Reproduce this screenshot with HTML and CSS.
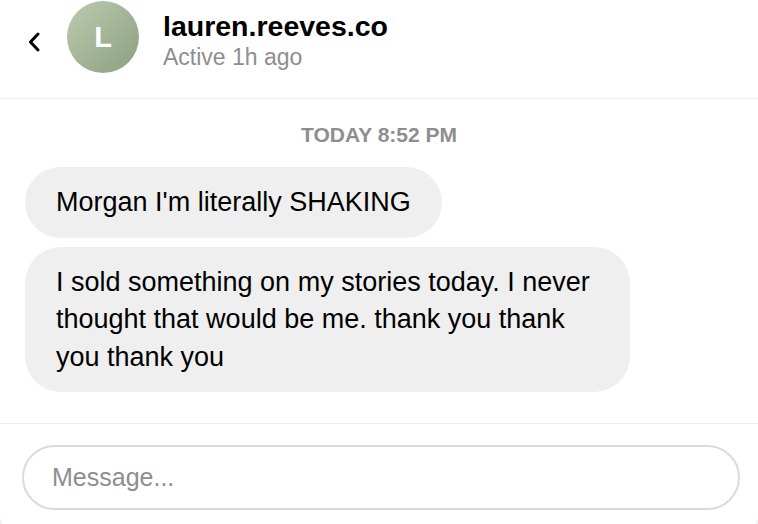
FILE: index.html
```html
<!DOCTYPE html>
<html lang="en">
<head>
    <meta charset="UTF-8">
    <meta name="viewport" content="width=device-width, initial-scale=1.0">
    <title>lauren.reeves.co</title>
    <link rel="stylesheet" href="styles.css">
</head>
<body>
    <div class="chat">
        <div class="chat-header">
            <svg class="back" width="14" height="20" viewBox="0 0 14 20">
                <path d="M11 2 L3.5 10 L11 18" fill="none" stroke="#000" stroke-width="3" stroke-linecap="round" stroke-linejoin="round"/>
            </svg>
            <div class="avatar">L</div>
            <div class="who">
                <div class="username">lauren.reeves.co</div>
                <div class="status">Active 1h ago</div>
            </div>
        </div>

        <div class="thread">
            <div class="stamp">TODAY 8:52 PM</div>
            <div class="bubble">Morgan I'm literally SHAKING</div>
            <div class="bubble">I sold something on my stories today. I never thought that would be me. thank you thank you thank you</div>
        </div>

        <div class="composer">
            <input class="message-input" type="text" placeholder="Message...">
        </div>
    </div>
</body>
</html>
```

FILE: styles.css
```css
html, body {
    margin: 0;
    height: 100%;
    overflow: hidden;
}
body {
    background-color: #f3f0ea;
    font-family: "Liberation Sans", Arial, sans-serif;
    color: #000;
}
.chat {
    background: #fff;
    height: 530px;
    border-radius: 0 0 14px 14px;
    display: flex;
    flex-direction: column;
}
.chat-header {
    display: flex;
    align-items: center;
    padding: 1px 24px 25px 27px;
    border-bottom: 1px solid #efefef;
}
.back {
    margin-top: 9px;
    margin-right: 26px;
}
.avatar {
    width: 72px;
    height: 72px;
    border-radius: 50%;
    background: linear-gradient(135deg, #bccbaf, #8c9f80);
    color: #fff;
    font-size: 29px;
    font-weight: bold;
    display: flex;
    justify-content: center;
    align-items: center;
    margin-right: 24px;
}
.who {
    margin-top: 5px;
}
.username {
    font-size: 28.5px;
    font-weight: bold;
    line-height: 34px;
}
.status {
    font-size: 23px;
    line-height: 27px;
    color: #8e8e8e;
    margin-top: 1px;
}
.thread {
    flex: 1;
    display: flex;
    flex-direction: column;
    align-items: flex-start;
    gap: 9px;
    padding: 24px 25px;
}
.stamp {
    align-self: center;
    font-size: 21px;
    font-weight: bold;
    line-height: 24px;
    color: #8e8e8e;
    margin-bottom: 11px;
}
.bubble {
    background-color: #efefef;
    font-size: 27px;
    line-height: 37.5px;
    padding: 17px 31px 16px;
    border-radius: 36px;
    max-width: 543px;
}
.composer {
    border-top: 1px solid #efefef;
    padding: 21px 18px 20px 22px;
}
.message-input {
    box-sizing: border-box;
    width: 100%;
    height: 65px;
    border: 2px solid #dbdbdb;
    border-radius: 33px;
    padding: 0 28px;
    font-family: "Liberation Sans", Arial, sans-serif;
    font-size: 25px;
    outline: none;
}
.message-input::placeholder {
    color: #8e8e8e;
}
```
